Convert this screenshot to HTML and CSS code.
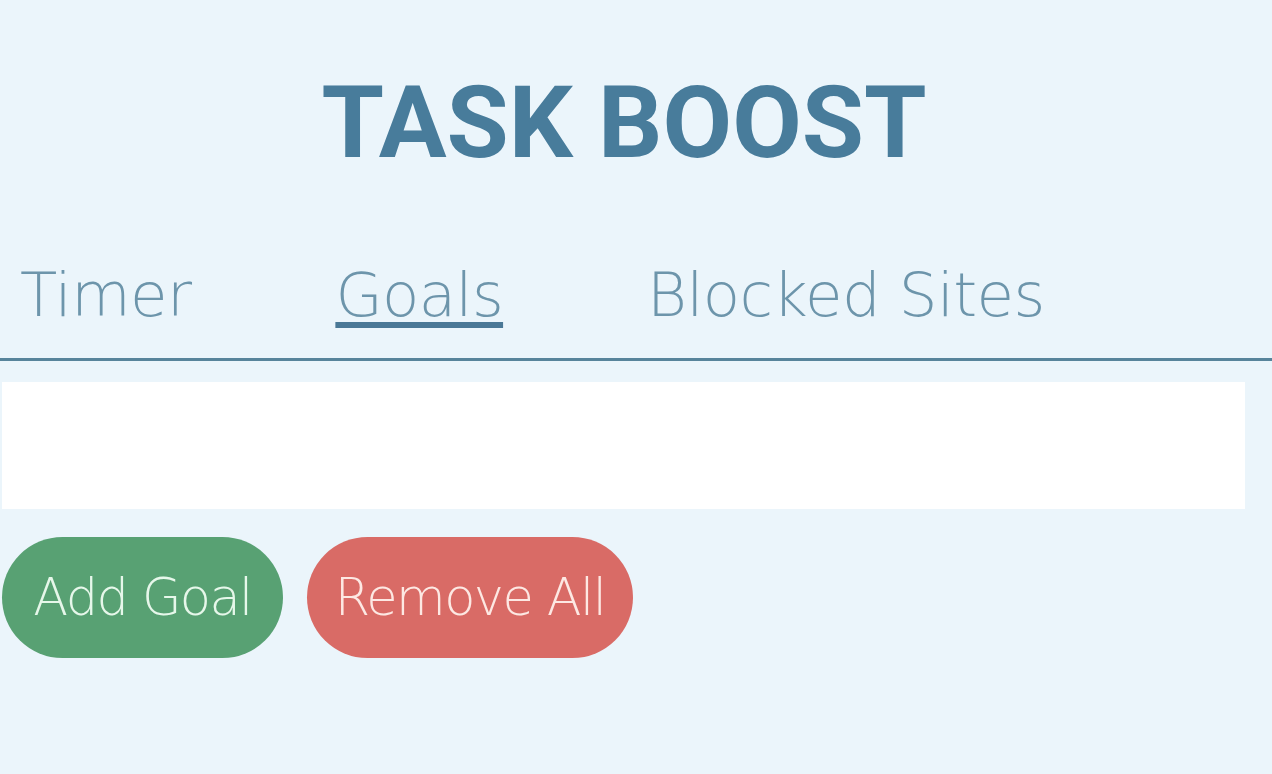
FILE: index.html
```html
<!DOCTYPE html>
<html>
<head>
<meta charset="utf-8">
<link rel="stylesheet" href="styles.css">
</head>
<body>
<div class="page">
  <header class="header">
    <h1 class="title">TASK BOOST</h1>
  </header>
  <nav class="tabs">
    <a class="tab">Timer</a>
    <a class="tab tab-active">Goals</a>
    <a class="tab">Blocked Sites</a>
  </nav>
  <main class="content">
    <div class="goal-input"></div>
    <div class="actions">
      <button class="btn btn-add">Add Goal</button>
      <button class="btn btn-remove">Remove All</button>
    </div>
  </main>
</div>
</body>
</html>
```
FILE: styles.css
```css
html, body {
  margin: 0;
  padding: 0;
  background: #ebf5fb;
}
.page {
  width: 1272px;
  height: 774px;
  overflow: hidden;
}
.header {
  width: 1248px;
  display: flex;
  justify-content: center;
  padding-top: 68px;
}
.title {
  margin: 0;
  font-family: Roboto, "Liberation Sans", sans-serif;
  font-weight: 700;
  font-size: 101px;
  line-height: 110px;
  color: #487c9b;
}
.tabs {
  display: flex;
  align-items: flex-end;
  padding: 86px 0 33px 20px;
  border-bottom: 3px solid #57849b;
}
.tab {
  font-family: "DejaVu Sans", sans-serif;
  font-weight: 200;
  font-size: 61px;
  line-height: 61px;
  letter-spacing: -0.6px;
  color: #6d95ab;
  text-decoration: none;
  white-space: nowrap;
}
.tab + .tab {
  margin-left: 144px;
}
.tab-active {
  text-decoration: underline;
  text-decoration-thickness: 6px;
  text-underline-offset: 6px;
  text-decoration-color: #4a7896;
}
.content {
  padding: 21px 0 0 2px;
}
.goal-input {
  width: 1243px;
  height: 127px;
  background: #ffffff;
}
.actions {
  display: flex;
  gap: 24px;
  margin-top: 28px;
}
.btn {
  display: flex;
  align-items: center;
  justify-content: center;
  border: none;
  height: 121px;
  border-radius: 61px;
  font-family: "DejaVu Sans", sans-serif;
  font-weight: 200;
  font-size: 51px;
  letter-spacing: -1.6px;
  white-space: nowrap;
  padding: 0;
}
.btn-add {
  background: #58a173;
  color: #e6f7ea;
  width: 281px;
}
.btn-remove {
  background: #d96b66;
  color: #fde8e3;
  width: 326px;
}
```
